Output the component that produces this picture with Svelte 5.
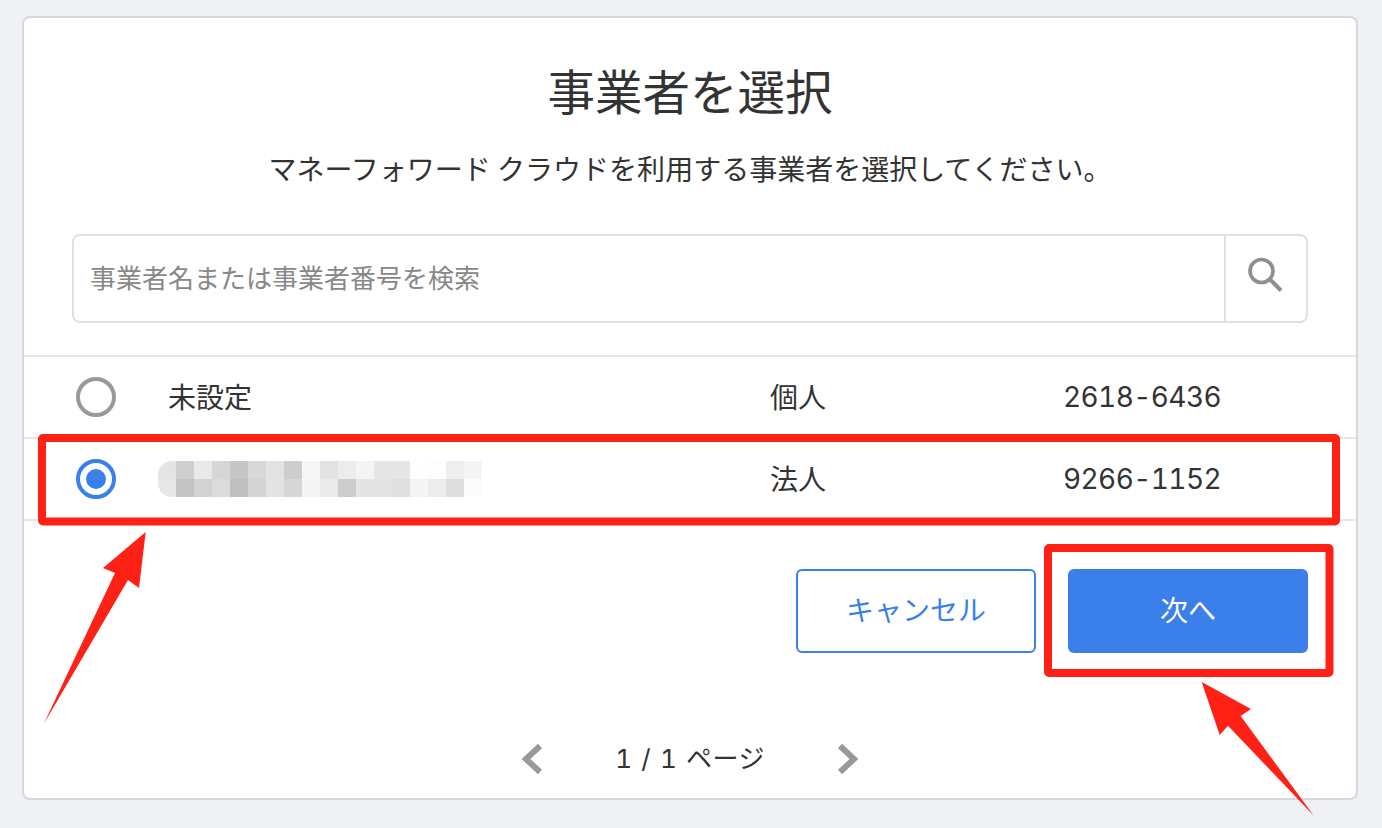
<script>
	const rows = [
		{ id: "none", name: "未設定", type: "個人", num: "2618-6436", checked: false },
		{ id: "corp", name: "", type: "法人", num: "9266-1152", checked: true }
	];

	// mosaic over the blurred company name, two rows of 18 blocks
	const mosaic = [
		"e4e4e4", "cfcfcf", "e9e9e9", "d6d6d6", "c6c6c6", "d9d9d9", "e3e3e3", "cdcdcd", "f6f6f6",
		"e3e3e3", "ececec", "f4f4f4", "e6e6e6", "e6e6e6", "fefefe", "fdfdfd", "eeeeee", "f5f5f5",
		"e8e8e8", "c4c4c4", "d3d3d3", "dbdbdb", "bfbfbf", "d4d4d4", "e3e3e3", "d6d6d6", "f5f5f5",
		"eaeaea", "cdcdcd", "e4e4e4", "e4e4e4", "e0e0e0", "f4f4f4", "ececec", "dedede", "fcfcfc"
	];
</script>

<div class="page">
	<div class="card">
		<h1>事業者を選択</h1>
		<p class="lead">マネーフォワード クラウドを利用する事業者を選択してください。</p>

		<div class="search">
			<div class="placeholder">事業者名または事業者番号を検索</div>
			<div class="search-btn">
				<svg width="36" height="36" viewBox="0 0 36 36" fill="none" stroke="#8f8f8f">
					<circle cx="13.500" cy="14" r="11.500" stroke-width="3.600" />
					<path d="M21.500 22 L33 33.500" stroke-width="4" />
				</svg>
			</div>
		</div>

		<div class="list">
			{#each rows as row}
				<div class="row">
					<span class="radio" class:checked={row.checked}></span>
					<div class="name">
						{#if row.name}
							{row.name}
						{:else}
							<div class="mosaic">
								{#each mosaic as c}
									<span style="background:#{c}"></span>
								{/each}
							</div>
						{/if}
					</div>
					<div class="type">{row.type}</div>
					<div class="num">{row.num}</div>
				</div>
			{/each}
		</div>

		<div class="actions">
			<button class="btn cancel">キャンセル</button>
			<button class="btn next">次へ</button>
		</div>

		<div class="pager">
			<svg width="22" height="32" viewBox="0 0 22 32" fill="none" stroke="#999" stroke-width="6">
				<path d="M19 3 L5 16 L19 29" />
			</svg>
			<span>1 / 1 ページ</span>
			<svg width="22" height="32" viewBox="0 0 22 32" fill="none" stroke="#999" stroke-width="6">
				<path d="M3 3 L17 16 L3 29" />
			</svg>
		</div>
	</div>

	<!-- red annotations drawn on top of the screenshot -->
	<svg class="marks" width="1382" height="828" viewBox="0 0 1382 828">
		<rect x="42" y="438" width="1294" height="83.500" rx="1" fill="none" stroke="#ff2116" stroke-width="8" />
		<rect x="1048" y="548" width="281.500" height="125" rx="1" fill="none" stroke="#ff2116" stroke-width="8" />
		<polygon points="145.700,532 103,568 115,573 43.700,724 128,580 139,588" fill="#ff2116" />
		<polygon points="1201.700,682 1251,709 1240.700,716 1314,816 1228,725.700 1219.700,735" fill="#ff2116" />
	</svg>
</div>

<style>
	:global(body) {
		margin: 0;
		background: #eff1f5;
	}

	.page {
		position: relative;
		width: 1382px;
		height: 828px;
		overflow: hidden;
		padding: 16px 24px 0 22px;
		box-sizing: border-box;
		font-family: "Noto Sans CJK JP", sans-serif;
		color: #333;
	}

	.card {
		box-sizing: border-box;
		height: 784px;
		background: #fff;
		border: 2px solid #d5d8de;
		border-radius: 8px;
		display: flex;
		flex-direction: column;
	}

	h1 {
		margin: 37px 0 0;
		height: 70px;
		line-height: 70px;
		font-size: 47.500px;
		font-weight: 400;
		text-align: center;
	}

	.lead {
		margin: 23px 0 0;
		height: 40px;
		line-height: 40px;
		font-size: 28px;
		text-align: center;
	}

	.search {
		box-sizing: border-box;
		display: flex;
		height: 89px;
		margin: 46px 48px 0 48px;
		border: 2px solid #e0e0e0;
		border-radius: 8px;
	}

	.placeholder {
		flex: 1;
		padding-left: 16px;
		line-height: 81px;
		font-size: 26px;
		color: #888;
	}

	.search-btn {
		box-sizing: border-box;
		width: 82px;
		padding-bottom: 8px;
		border-left: 2px solid #e0e0e0;
		display: flex;
		align-items: center;
		justify-content: center;
	}

	.list {
		margin-top: 32px;
		border-top: 2px solid #e6e6e6;
	}

	.row {
		box-sizing: border-box;
		height: 82px;
		display: flex;
		align-items: center;
		border-bottom: 2px solid #e6e6e6;
		font-size: 28px;
	}

	.radio {
		box-sizing: border-box;
		width: 40px;
		height: 40px;
		margin-left: 52px;
		border: 4px solid #999;
		border-radius: 50%;
		display: flex;
		align-items: center;
		justify-content: center;
	}

	.radio.checked {
		border-color: #3b7fea;
	}

	.radio.checked::after {
		content: "";
		width: 20px;
		height: 20px;
		border-radius: 50%;
		background: #3b7fea;
	}

	.name {
		width: 602px;
		margin-left: 52px;
		padding-bottom: 2px;
	}

	.mosaic {
		width: 324px;
		height: 36px;
		margin: 0 0 -2px -10px;
		display: grid;
		grid-template-columns: repeat(18, 18px);
		border-radius: 14px 0 0 14px;
		overflow: hidden;
	}

	.type {
		width: 293px;
		padding-bottom: 2px;
	}

	.num {
		font-family: Inter, sans-serif;
		font-variant-numeric: tabular-nums;
		letter-spacing: -0.600px;
	}

	.actions {
		display: flex;
		justify-content: flex-end;
		gap: 32px;
		margin: 48px 48px 0 0;
	}

	.btn {
		box-sizing: border-box;
		width: 240px;
		height: 84px;
		border-radius: 6px;
		font-family: inherit;
		font-size: 28px;
		padding: 0 0 5px;
	}

	.cancel {
		background: #fff;
		border: 2px solid #3b7fea;
		color: #3b7fea;
	}

	.next {
		background: #3b7fea;
		border: 0;
		color: #fff;
	}

	.pager {
		display: flex;
		align-items: center;
		justify-content: center;
		gap: 72px;
		margin-top: 72px;
		font-family: Inter, "Noto Sans CJK JP", sans-serif;
		font-size: 26px;
		font-variant-numeric: tabular-nums;
		letter-spacing: 0.400px;
		word-spacing: 1.500px;
		height: 68px;
		line-height: 68px;
	}

	.marks {
		position: absolute;
		left: 0;
		top: 0;
		pointer-events: none;
	}
</style>
